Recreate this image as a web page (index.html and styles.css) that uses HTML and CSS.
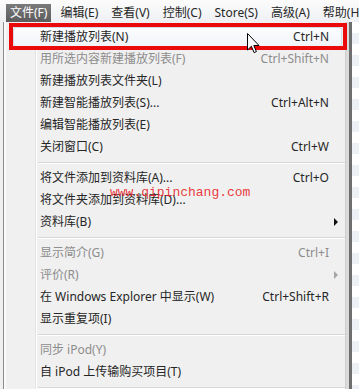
FILE: index.html
```html
<!DOCTYPE html>
<html lang="zh-CN">
<head>
    <meta charset="UTF-8">
    <title>文件菜单</title>
    <link rel="stylesheet" href="styles.css">
</head>
<body>
    <div class="screen">
        <div class="menubar">
            <span class="top active">文件(F)</span>
            <span class="top">编辑(E)</span>
            <span class="top">查看(V)</span>
            <span class="top">控制(C)</span>
            <span class="top">Store(S)</span>
            <span class="top">高级(A)</span>
            <span class="top">帮助(H)</span>
        </div>
        <div class="main">
            <div class="menu">
                <div class="item hover"><span class="label">新建播放列表(N)</span><span class="key">Ctrl+N</span><span class="arrow"></span></div>
                <div class="item off"><span class="label">用所选内容新建播放列表(F)</span><span class="key">Ctrl+Shift+N</span><span class="arrow"></span></div>
                <div class="item"><span class="label">新建播放列表文件夹(L)</span><span class="key"></span><span class="arrow"></span></div>
                <div class="item"><span class="label">新建智能播放列表(S)...</span><span class="key">Ctrl+Alt+N</span><span class="arrow"></span></div>
                <div class="item"><span class="label">编辑智能播放列表(E)</span><span class="key"></span><span class="arrow"></span></div>
                <div class="item"><span class="label">关闭窗口(C)</span><span class="key">Ctrl+W</span><span class="arrow"></span></div>
                <div class="sep"></div>
                <div class="item"><span class="label">将文件添加到资料库(A)...</span><span class="key">Ctrl+O</span><span class="arrow"></span></div>
                <div class="item"><span class="label">将文件夹添加到资料库(D)...</span><span class="key"></span><span class="arrow"></span></div>
                <div class="item"><span class="label">资料库(B)</span><span class="key"></span><span class="arrow sub"></span></div>
                <div class="sep"></div>
                <div class="item off"><span class="label">显示简介(G)</span><span class="key">Ctrl+I</span><span class="arrow"></span></div>
                <div class="item off"><span class="label">评价(R)</span><span class="key"></span><span class="arrow sub"></span></div>
                <div class="item"><span class="label">在 Windows Explorer 中显示(W)</span><span class="key">Ctrl+Shift+R</span><span class="arrow"></span></div>
                <div class="item"><span class="label">显示重复项(I)</span><span class="key"></span><span class="arrow"></span></div>
                <div class="sep"></div>
                <div class="item off"><span class="label">同步 iPod(Y)</span><span class="key"></span><span class="arrow"></span></div>
                <div class="item"><span class="label">自 iPod 上传输购买项目(T)</span><span class="key"></span><span class="arrow"></span></div>
                <div class="sep"></div>
            </div>
            <div class="frame"></div>
        </div>
        <div class="watermark">www.qipinchang.com</div>
        <svg class="cursor" width="14" height="21" viewBox="0 0 14 21">
            <path d="M0.5 0.5 L0.5 17 L4.4 13.3 L7.1 19.6 L9.4 18.6 L6.8 12.5 L12 12.5 Z" fill="#fff" stroke="#000" stroke-width="1"/>
        </svg>
    </div>
</body>
</html>
```

FILE: styles.css
```css
body {
    margin: 0;
    width: 359px;
    height: 389px;
    overflow: hidden;
    font-family: "Noto Sans", "Noto Sans CJK SC", sans-serif;
    font-size: 12px;
    color: #262626;
    background: #f0f0f0;
}
.screen {
    position: relative;
    height: 389px;
}
.menubar {
    display: flex;
    height: 22px;
    box-sizing: border-box;
    padding: 4px 0 0 4px;
    background: linear-gradient(#fcfcfc, #eef0f3);
    white-space: nowrap;
}
.top {
    margin: 0 2px;
    padding: 0 4px;
    line-height: 18px;
}
.top + .top {
    margin-left: 3px;
}
.top.active {
    background: linear-gradient(#7a7a7a, #5c5c5c);
    color: #fff;
}
.main {
    display: flex;
    height: 367px;
}
.menu {
    width: 341px;
    margin-left: 3px;
    padding-top: 4px;
    border-left: 1px solid #8c8c8c;
    border-right: 1px solid #cfcfcf;
    background: linear-gradient(to right, #f0f0f0 31px, #e2e3e3 31px 32px, #fff 32px 33px, #f0f0f0 33px);
    box-shadow: inset 2px 0 0 #fafafa;
}
.item {
    position: relative;
    display: grid;
    grid-template-columns: 1fr auto 14px;
    height: 22px;
    line-height: 22px;
    padding: 0 2px 0 36px;
    white-space: nowrap;
}
.item.off {
    color: #8d8d8d;
}
.item.hover::before {
    content: "";
    position: absolute;
    left: 9px;
    right: 3px;
    top: 1px;
    bottom: 1px;
    border: 1px solid #d3dbe6;
    border-radius: 3px;
    background: linear-gradient(#fcfdfe, #f0f4f9);
}
.item.hover::after {
    content: "";
    position: absolute;
    left: 5px;
    right: -2px;
    top: -3px;
    bottom: -2px;
    border: 4px solid #ea0a0a;
}
.label, .key {
    position: relative;
}
.key {
    text-align: right;
}
.arrow.sub::after {
    content: "";
    display: block;
    margin: 7px 0 0 5px;
    width: 0;
    height: 0;
    border-left: 4px solid #111;
    border-top: 4px solid transparent;
    border-bottom: 4px solid transparent;
}
.item.off .arrow.sub::after {
    border-left-color: #a5a5a5;
}
.sep {
    height: 9px;
    margin-left: 34px;
    box-sizing: border-box;
    padding-top: 4px;
}
.sep::after {
    content: "";
    display: block;
    border-top: 1px solid #d7d7d7;
    border-bottom: 1px solid #fff;
}
.frame {
    flex: 1;
    background:
        linear-gradient(to right, #dadada 0 3px, #6e6e6e 3px 6px, transparent 6px),
        repeating-linear-gradient(#ffffff 0 11px, #edf0f5 11px 22px);
}
.watermark {
    position: absolute;
    left: 110px;
    top: 185px;
    font-family: "Liberation Mono", monospace;
    font-size: 13px;
    line-height: 16px;
    color: rgba(232, 30, 40, 0.9);
}
.cursor {
    position: absolute;
    left: 247px;
    top: 33px;
}
```
